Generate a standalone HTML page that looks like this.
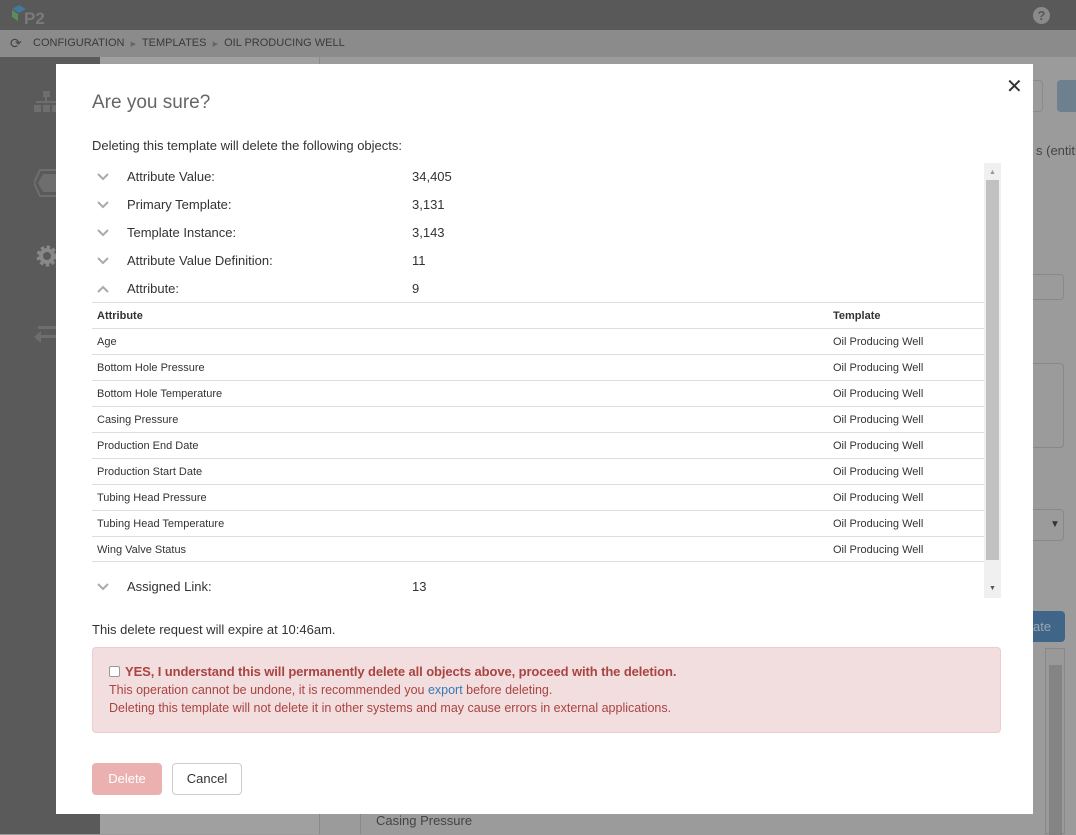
<!DOCTYPE html>
<html><head><meta charset="utf-8"><style>
*{box-sizing:border-box;margin:0;padding:0}
body{width:1076px;height:834px;overflow:hidden;position:relative;background:#9b9b9b;font-family:"Liberation Sans","DejaVu Sans",sans-serif;color:#333}
.abs{position:absolute}
#top{left:0;top:0;width:1076px;height:30px;background:#595959}
#bc{left:0;top:30px;width:1076px;height:27px;background:#8b8b8b;font-size:11px;color:#3a3a3a}
#side{left:0;top:57px;width:100px;height:777px;background:#5a5a5a}
#panel{left:100px;top:57px;width:220px;height:777px;background:#a0a0a0;border-right:1px solid #8a8a8a}
#modal{left:56px;top:64px;width:977px;height:750px;background:#fff}
.row{position:absolute;left:36px;font-size:13px;color:#333;height:28px;width:880px}
.row svg{position:absolute;left:5px;top:4px}
.row .l{position:absolute;left:35px}
.row .v{position:absolute;left:320px}
.tr{position:absolute;left:36px;width:892px;height:26px;border-top:1px solid #ddd;font-size:11px;color:#333}
.tr span{position:absolute;top:7px}
.tr .a{left:5px}.tr .t{left:741px}
</style></head><body>
<div id="top" class="abs">
 <svg class="abs" style="left:10px;top:5px" width="40" height="22"><polygon points="2,4 9,0 16,4 9,8" fill="#3e7a9a"/><polygon points="2,5 8,9 8,16 2,12" fill="#5c8c5c"/><text x="14" y="19" font-family="Liberation Sans" font-weight="bold" font-size="17" fill="#7a7a7a">P2</text></svg>
 <div class="abs" style="left:1033px;top:7px;width:17px;height:17px;border-radius:50%;background:#8a8a8a;color:#595959;font-weight:bold;font-size:13px;text-align:center;line-height:17px">?</div>
</div>
<div id="bc" class="abs"><span class="abs" style="left:10px;top:5px;font-size:14px;color:#444">⟳</span><span class="abs" style="left:33px;top:7px">CONFIGURATION &nbsp;<span style="font-size:7px;color:#666">▶</span>&nbsp; TEMPLATES &nbsp;<span style="font-size:7px;color:#666">▶</span>&nbsp; OIL PRODUCING WELL</span></div>
<div id="side" class="abs">
 <svg class="abs" style="left:34px;top:34px" width="24" height="24"><rect x="9" y="0" width="7" height="6" fill="#6e6e6e"/><rect x="11" y="6" width="2" height="6" fill="#6e6e6e"/><rect x="2" y="10" width="20" height="2" fill="#6e6e6e"/><rect x="0" y="14" width="7" height="7" fill="#6e6e6e"/><rect x="9" y="14" width="7" height="7" fill="#6e6e6e"/><rect x="18" y="14" width="6" height="7" fill="#6e6e6e"/></svg>
 <svg class="abs" style="left:34px;top:112px" width="24" height="28"><polygon points="6,1 24,1 24,27 6,27 0,14" fill="none" stroke="#6e6e6e" stroke-width="2"/><polygon points="9,5 24,5 24,23 9,23 4,14" fill="#6e6e6e"/></svg>
 <svg class="abs" style="left:36px;top:188px" width="22" height="22"><circle cx="11" cy="11" r="8" fill="none" stroke="#888" stroke-width="5" stroke-dasharray="3 2.3"/><circle cx="11" cy="11" r="6" fill="none" stroke="#888" stroke-width="4"/></svg>
 <svg class="abs" style="left:34px;top:266px" width="24" height="22"><rect x="4" y="3" width="20" height="3" fill="#6e6e6e"/><polygon points="0,14 7,8 7,20" fill="#6e6e6e"/><rect x="6" y="12" width="18" height="3" fill="#6e6e6e"/></svg>
</div>
<div id="panel" class="abs"></div>
<div class="abs" style="left:1033px;top:80px;width:10px;height:32px;border:1px solid #8a8a8a;border-left:none;border-radius:0 4px 4px 0"></div>
<div class="abs" style="left:1057px;top:80px;width:19px;height:32px;background:#6e7f8e;border-radius:4px 0 0 4px"></div>
<div class="abs" style="left:1036px;top:143px;font-size:13px;color:#444;white-space:nowrap">s (entitie</div>
<div class="abs" style="left:1033px;top:274px;width:31px;height:26px;border:1px solid #888;border-left:none;border-radius:0 4px 4px 0"></div>
<div class="abs" style="left:1033px;top:363px;width:31px;height:85px;border:1px solid #888;border-left:none;border-radius:0 4px 4px 0"></div>
<div class="abs" style="left:1033px;top:509px;width:31px;height:32px;border:1px solid #888;border-left:none;border-radius:0 4px 4px 0;font-size:10px;color:#333;padding:9px 0 0 17px">▼</div>
<div class="abs" style="left:1033px;top:611px;width:32px;height:31px;background:#3f6688;border-radius:0 4px 4px 0;color:#9aa7b2;font-size:13px;padding:8px 0 0 0">ate</div>
<div class="abs" style="left:1045px;top:648px;width:20px;height:186px;background:#999;border:1px solid #888"><div style="position:absolute;left:3px;top:16px;width:13px;height:170px;background:#848484"></div></div>
<div class="abs" style="left:360px;top:790px;width:1px;height:44px;background:#888"></div>
<div class="abs" style="left:376px;top:813px;font-size:13px;color:#444">Casing Pressure</div>

<div id="modal" class="abs">
 <div class="abs" style="left:950px;top:10px;font-size:20px;color:#333">✕</div>
 <div class="abs" style="left:36px;top:28px;font-size:19px;color:#666">Are you sure?</div>
 <div class="abs" style="left:36px;top:74px;font-size:13px">Deleting this template will delete the following objects:</div>
 <div class="row" style="top:105px"><svg width="12" height="8"><polyline points="1,1 6,6 11,1" fill="none" stroke="#aaa" stroke-width="2"/></svg><span class="l">Attribute Value:</span><span class="v">34,405</span></div>
 <div class="row" style="top:133px"><svg width="12" height="8"><polyline points="1,1 6,6 11,1" fill="none" stroke="#aaa" stroke-width="2"/></svg><span class="l">Primary Template:</span><span class="v">3,131</span></div>
 <div class="row" style="top:161px"><svg width="12" height="8"><polyline points="1,1 6,6 11,1" fill="none" stroke="#aaa" stroke-width="2"/></svg><span class="l">Template Instance:</span><span class="v">3,143</span></div>
 <div class="row" style="top:189px"><svg width="12" height="8"><polyline points="1,1 6,6 11,1" fill="none" stroke="#aaa" stroke-width="2"/></svg><span class="l">Attribute Value Definition:</span><span class="v">11</span></div>
 <div class="row" style="top:217px"><svg width="12" height="8"><polyline points="1,7 6,2 11,7" fill="none" stroke="#aaa" stroke-width="2"/></svg><span class="l">Attribute:</span><span class="v">9</span></div>
 <div class="tr" style="top:238px;font-weight:bold"><span class="a">Attribute</span><span class="t">Template</span></div>
 <div class="tr" style="top:264px"><span class="a">Age</span><span class="t">Oil Producing Well</span></div>
 <div class="tr" style="top:290px"><span class="a">Bottom Hole Pressure</span><span class="t">Oil Producing Well</span></div>
 <div class="tr" style="top:316px"><span class="a">Bottom Hole Temperature</span><span class="t">Oil Producing Well</span></div>
 <div class="tr" style="top:342px"><span class="a">Casing Pressure</span><span class="t">Oil Producing Well</span></div>
 <div class="tr" style="top:368px"><span class="a">Production End Date</span><span class="t">Oil Producing Well</span></div>
 <div class="tr" style="top:394px"><span class="a">Production Start Date</span><span class="t">Oil Producing Well</span></div>
 <div class="tr" style="top:420px"><span class="a">Tubing Head Pressure</span><span class="t">Oil Producing Well</span></div>
 <div class="tr" style="top:446px"><span class="a">Tubing Head Temperature</span><span class="t">Oil Producing Well</span></div>
 <div class="tr" style="top:472px;border-bottom:1px solid #ddd"><span class="a">Wing Valve Status</span><span class="t">Oil Producing Well</span></div>
 <div class="row" style="top:515px"><svg width="12" height="8"><polyline points="1,1 6,6 11,1" fill="none" stroke="#aaa" stroke-width="2"/></svg><span class="l">Assigned Link:</span><span class="v">13</span></div>
 <div class="abs" style="left:928px;top:99px;width:17px;height:435px;background:#f0f0f0">
  <div style="position:absolute;left:5px;top:6px;font-size:7px;color:#999">▲</div>
  <div style="position:absolute;left:2px;top:17px;width:13px;height:380px;background:#c1c1c1"></div>
  <div style="position:absolute;left:5px;top:422px;font-size:7px;color:#555">▼</div>
 </div>
 <div class="abs" style="left:36px;top:558px;font-size:13px">This delete request will expire at 10:46am.</div>
 <div class="abs" style="left:36px;top:583px;width:909px;height:86px;background:#f2dede;border:1px solid #ebccd1;border-radius:4px;color:#a94442;font-size:12.5px;line-height:18px;padding:15px 0 0 16px">
  <div style="font-weight:bold;font-size:13px;letter-spacing:-0.1px"><span style="display:inline-block;width:11px;height:11px;border:1px solid #999;border-radius:2px;background:#fff;vertical-align:-1px;margin-right:5px"></span>YES, I understand this will permanently delete all objects above, proceed with the deletion.</div>
  <div>This operation cannot be undone, it is recommended you <span style="color:#337ab7">export</span> before deleting.</div>
  <div>Deleting this template will not delete it in other systems and may cause errors in external applications.</div>
 </div>
 <div class="abs" style="left:36px;top:699px;width:70px;height:32px;background:#ebb1b1;border-radius:4px;color:#fff;font-size:13px;text-align:center;line-height:32px">Delete</div>
 <div class="abs" style="left:116px;top:699px;width:70px;height:32px;border:1px solid #ccc;border-radius:4px;color:#333;font-size:13px;text-align:center;line-height:30px">Cancel</div>
</div>
</body></html>
